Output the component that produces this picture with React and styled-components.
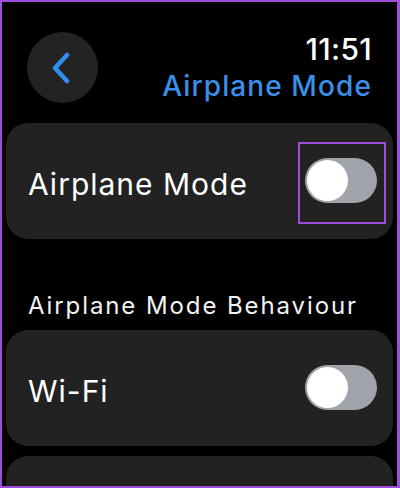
import styled, { createGlobalStyle } from "styled-components";

const GlobalStyle = createGlobalStyle`
  * { box-sizing: border-box; }
  body {
    margin: 0;
    background: #000;
    font-family: Inter, "Open Sans", sans-serif;
    -webkit-font-smoothing: antialiased;
  }
`;

function Toggle({ on }) {
  return (
    <Track $on={on}>
      <Knob $on={on} />
    </Track>
  );
}

function SettingRow({ label, marked }) {
  return (
    <Card>
      <Label>{label}</Label>
      <Highlight $marked={marked}>
        <Toggle on={false} />
      </Highlight>
    </Card>
  );
}

function App() {
  return (
    <>
      <GlobalStyle />
      <Frame>
        <Header>
          <BackButton aria-label="Back">
            <svg width="20" height="32" viewBox="0 0 20 32" fill="none">
              <path
                d="M16 3 L4 16 L16 29"
                stroke="#2f8ff0"
                strokeWidth="4.5"
                strokeLinecap="round"
                strokeLinejoin="round"
              />
            </svg>
          </BackButton>
          <TitleCol>
            <Time>11:51</Time>
            <Title>Airplane Mode</Title>
          </TitleCol>
        </Header>
        <List>
          <SettingRow label="Airplane Mode" marked />
          <SectionTitle>Airplane Mode Behaviour</SectionTitle>
          <SettingRow label="Wi-Fi" />
          <Card />
        </List>
      </Frame>
    </>
  );
}

const Frame = styled.div`
  width: 400px;
  height: 488px;
  overflow: hidden;
  background: #000;
  border: 2px solid #9d4fdc;
  border-right-width: 3px;
`;

const Header = styled.div`
  display: flex;
  justify-content: space-between;
  align-items: flex-start;
  padding: 30px 25px 0 25px;
  height: 121px;
`;

const BackButton = styled.button`
  width: 71px;
  height: 71px;
  border-radius: 50%;
  border: none;
  background: #232323;
  display: flex;
  align-items: center;
  justify-content: center;
  padding: 0 4px 0 0;
`;

const TitleCol = styled.div`
  display: flex;
  flex-direction: column;
  align-items: flex-end;
`;

const Time = styled.span`
  color: #fff;
  font-size: 30px;
  font-weight: 500;
  line-height: 34px;
  letter-spacing: 0.3px;
`;

const Title = styled.span`
  color: #3a8fe8;
  font-size: 28px;
  font-weight: 500;
  line-height: 34px;
  letter-spacing: 1.1px;
  margin-top: 3px;
`;

const List = styled.div`
  display: flex;
  flex-direction: column;
  padding: 0 4px;
`;

const Card = styled.div`
  display: flex;
  align-items: center;
  justify-content: space-between;
  height: 116px;
  flex-shrink: 0;
  padding: 0 7px 0 22px;
  border-radius: 22px;
  background: #222222;
  & + & {
    margin-top: 10px;
  }
`;

const Label = styled.span`
  color: #fff;
  font-size: 30px;
  font-weight: 400;
  letter-spacing: 1px;
  margin-top: 5px;
`;

const SectionTitle = styled.div`
  color: #f2f2f2;
  font-size: 24px;
  font-weight: 400;
  line-height: 30px;
  letter-spacing: 1.9px;
  padding: 0 0 9px 22px;
  height: 91px;
  display: flex;
  align-items: flex-end;
`;

const Highlight = styled.div`
  border: 2px solid ${(p) => (p.$marked ? "#9d4fdc" : "transparent")};
  padding: 14px 7px 19px 5px;
  margin-top: 4px;
`;

const Track = styled.div`
  width: 72px;
  height: 45px;
  border-radius: 23px;
  background: ${(p) => (p.$on ? "#34c759" : "#a1a3ab")};
  padding: 2px;
  display: flex;
  justify-content: ${(p) => (p.$on ? "flex-end" : "flex-start")};
`;

const Knob = styled.div`
  width: 41px;
  height: 41px;
  border-radius: 50%;
  background: #fff;
`;

export default App;
